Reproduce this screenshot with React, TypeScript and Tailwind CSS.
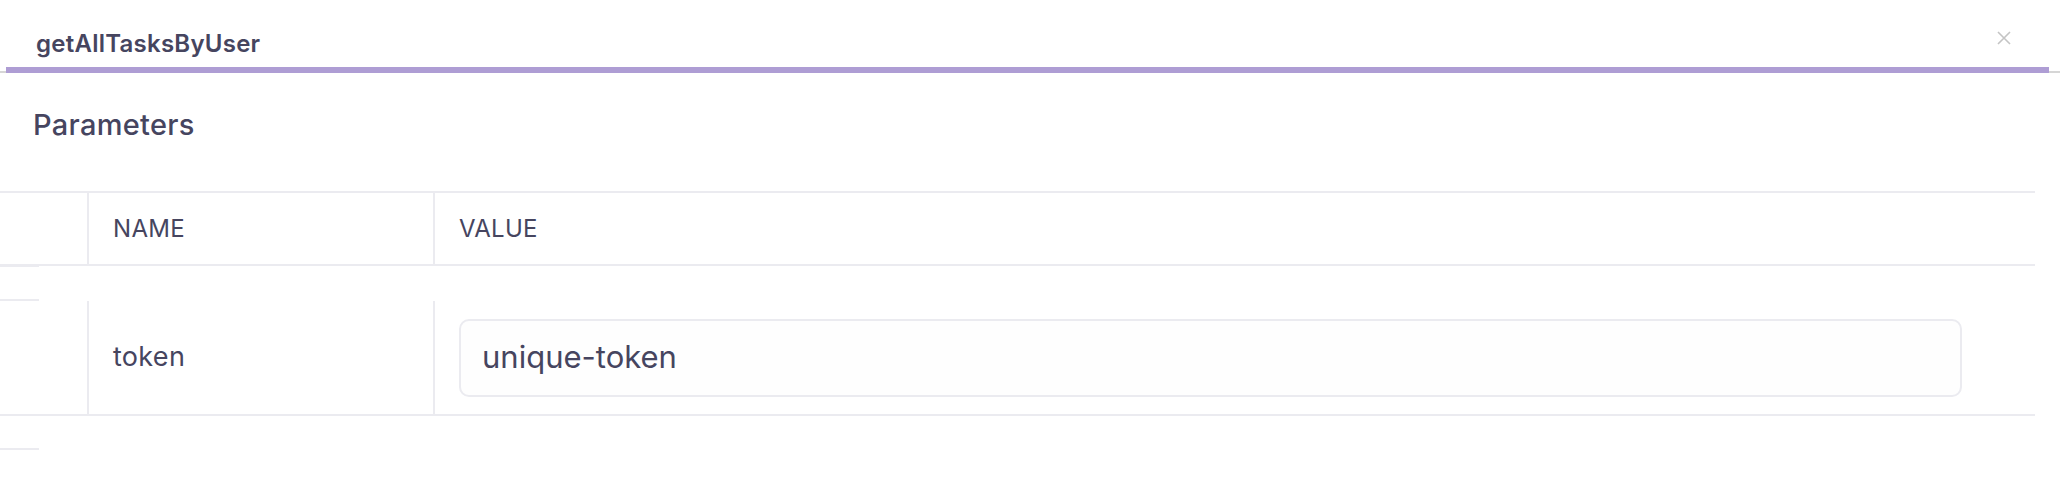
import React from "react";

export default function App() {
  const font = { fontFamily: "Inter, 'Noto Sans', sans-serif" };
  return (
    <div className="w-[2060px] h-[494px] bg-white text-[#46455f] overflow-hidden" style={font}>
      {/* Tab bar */}
      <div className="h-[73px] flex border-b-2 border-[#d6d6d6]">
        <div className="ml-[6px] w-[2043px] -mb-[2px] border-b-[6px] border-[#ae9dd4] flex items-center justify-between pl-[30px] pr-[38px]">
          <span className="text-[24px] font-semibold leading-[30px] mt-[20px] tracking-[0.25px]">getAllTasksByUser</span>
          <svg width="14" height="14" viewBox="0 0 14 14" className="mt-[8px]">
            <path d="M1 1 L13 13 M13 1 L1 13" stroke="#c4c4c4" strokeWidth="1.6" />
          </svg>
        </div>
      </div>

      {/* Parameters heading */}
      <div className="pl-[33px] pt-[34px] h-[118px]">
        <h2 className="text-[29px] font-medium leading-[36px] tracking-[0.3px]">Parameters</h2>
      </div>

      {/* Table */}
      <div className="w-[2035px]">
        {/* header row */}
        <div className="flex h-[75px] border-t-2 border-b-2 border-[#ebebf0]">
          <div className="w-[89px] border-r-2 border-[#ebebf0]"></div>
          <div className="w-[346px] border-r-2 border-[#ebebf0] flex items-center pl-[24px] text-[24px] tracking-[0.3px]">NAME</div>
          <div className="flex-1 flex items-center pl-[24px] text-[24px] tracking-[0.3px]">VALUE</div>
        </div>
        {/* spacer row */}
        <div className="relative h-[35px]">
          <div className="absolute left-0 top-[-1px] w-[39px] h-[2px] bg-[#ebebf0]"></div>
          <div className="absolute left-0 bottom-0 w-[39px] h-[2px] bg-[#ebebf0]"></div>
        </div>
        {/* data row */}
        <div className="flex h-[115px] border-b-2 border-[#ebebf0]">
          <div className="w-[89px] border-r-2 border-[#ebebf0]"></div>
          <div className="w-[346px] border-r-2 border-[#ebebf0] flex items-center pl-[24px] text-[27px] tracking-[0.3px]">token</div>
          <div className="flex-1 flex items-center pl-[24px]">
            <div className="w-[1503px] h-[78px] border-2 border-[#ebebf0] rounded-[10px] bg-[#fefefe] flex items-center pl-[21px] text-[31px]">
              unique-token
            </div>
          </div>
        </div>
        <div className="mt-[32px] w-[39px] h-[2px] bg-[#ebebf0]"></div>
      </div>
    </div>
  );
}
